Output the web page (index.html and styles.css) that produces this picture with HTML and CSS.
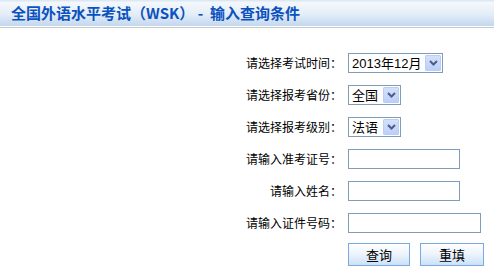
FILE: index.html
```html
<!DOCTYPE html>
<html>
<head>
  <meta charset="utf-8">
  <title>全国外语水平考试（WSK） - 输入查询条件</title>
  <link rel="stylesheet" href="styles.css">
</head>
<body>
  <div class="head">全国外语水平考试（WSK）&nbsp;-&nbsp; 输入查询条件</div>
  <form class="query">
    <label class="lbl">请选择考试时间：</label>
    <span class="pick pick-wide">
      <select><option>2013年12月</option></select>
      <span class="pick-btn"><svg width="9" height="6" viewBox="0 0 9 6"><path d="M1 1l3.5 3.5L8 1" fill="none" stroke="#4a5e86" stroke-width="2"/></svg></span>
    </span>

    <label class="lbl">请选择报考省份：</label>
    <span class="pick">
      <select><option>全国</option></select>
      <span class="pick-btn"><svg width="9" height="6" viewBox="0 0 9 6"><path d="M1 1l3.5 3.5L8 1" fill="none" stroke="#4a5e86" stroke-width="2"/></svg></span>
    </span>

    <label class="lbl">请选择报考级别：</label>
    <span class="pick">
      <select><option>法语</option></select>
      <span class="pick-btn"><svg width="9" height="6" viewBox="0 0 9 6"><path d="M1 1l3.5 3.5L8 1" fill="none" stroke="#4a5e86" stroke-width="2"/></svg></span>
    </span>

    <label class="lbl">请输入准考证号：</label>
    <input class="txt" type="text">

    <label class="lbl">请输入姓名：</label>
    <input class="txt" type="text">

    <label class="lbl">请输入证件号码：</label>
    <input class="txt txt-long" type="text">

    <span></span>
    <div class="btns">
      <button type="button" class="btn">查询</button>
      <button type="button" class="btn btn-reset">重填</button>
    </div>
  </form>
</body>
</html>
```
FILE: styles.css
```css
html, body {
  margin: 0;
  padding: 0;
  background: #fff;
}
body {
  font-family: "Noto Sans CJK SC", "Liberation Sans", sans-serif;
  font-size: 12px;
  color: #000;
}
.head {
  height: 26px;
  line-height: 26px;
  padding-left: 11px;
  font-size: 15px;
  font-weight: bold;
  color: #0b52c0;
  background: linear-gradient(#d6e4f3 0, #f4f8fc 10%, #e4edf8 55%, #c3d7ee 100%);
  border-bottom: 1px solid #fff;
  box-shadow: 0 1px 0 #c6cbd0;
}
.query {
  display: grid;
  grid-template-columns: 342px auto;
  column-gap: 6px;
  row-gap: 12px;
  margin-top: 26px;
  align-items: center;
  justify-items: start;
}
.lbl {
  justify-self: end;
  line-height: 20px;
}
.pick {
  display: inline-flex;
  align-items: center;
  box-sizing: border-box;
  width: 53px;
  height: 20px;
  border: 1px solid #7f9db9;
  background: #fff;
}
.pick-wide {
  width: 95px;
}
.pick select {
  appearance: none;
  -webkit-appearance: none;
  flex: 1;
  min-width: 0;
  height: 18px;
  border: 0;
  padding: 0 0 0 3px;
  margin: 0;
  background: transparent;
  font-family: "Liberation Sans", "Noto Sans CJK SC", sans-serif;
  font-size: 13px;
  color: #000;
  outline: none;
}
.pick-btn {
  display: flex;
  align-items: center;
  justify-content: center;
  box-sizing: border-box;
  width: 16px;
  height: 16px;
  margin-right: 1px;
  border: 1px solid #b9cdf6;
  border-radius: 1px;
  background: linear-gradient(#d4e1fc, #bccff8);
}
.txt {
  box-sizing: border-box;
  width: 112px;
  height: 20px;
  margin: 0;
  padding: 0 3px;
  border: 1px solid #7f9db9;
  font-size: 12px;
}
.txt-long {
  width: 133px;
}
.btns {
  display: flex;
  gap: 10px;
  margin-top: -2px;
}
.btn {
  box-sizing: border-box;
  width: 62px;
  height: 23px;
  margin: 0;
  padding: 0;
  border: 1px solid #78aae6;
  background: linear-gradient(#ffffff, #eef5fd 45%, #cde0f6);
  font-family: "Noto Sans CJK SC", sans-serif;
  font-size: 13px;
  color: #000;
}
.btn-reset {
  width: 64px;
}
```
